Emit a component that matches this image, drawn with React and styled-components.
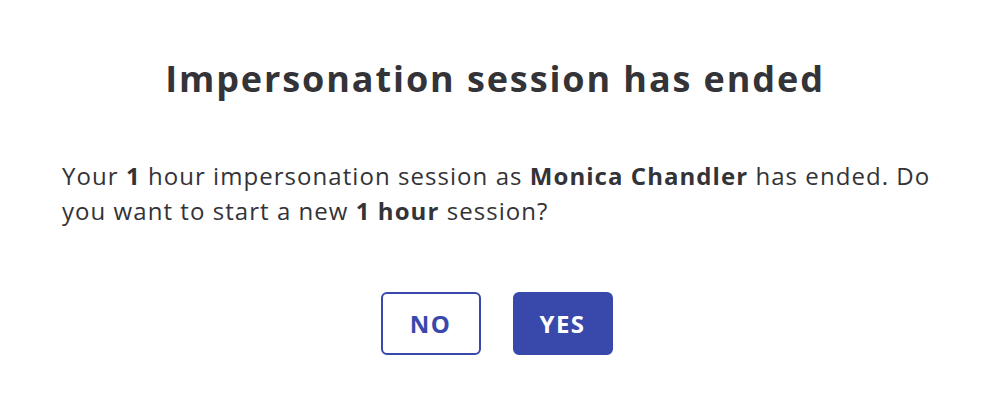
import React from "react";
import styled, { createGlobalStyle } from "styled-components";

const Global = createGlobalStyle`
  html, body { margin: 0; padding: 0; background: #ffffff; }
  body { font-family: "Open Sans", Lato, "Liberation Sans", sans-serif; }
`;

const Dialog = styled.div`
  box-sizing: border-box;
  width: 993px;
  height: 414px;
  padding: 55px 62px 0;
  display: flex;
  flex-direction: column;
  background: #ffffff;
`;

const Title = styled.h1`
  margin: 0 3px 0 0;
  text-align: center;
  font-size: 36px;
  line-height: 48px;
  font-weight: 700;
  letter-spacing: 1.9px;
  color: #333338;
`;

const Message = styled.p`
  margin: 55px -20px 0 0;
  font-size: 24px;
  line-height: 35px;
  font-weight: 400;
  letter-spacing: 1.05px;
  color: #333338;
  b { font-weight: 700; }
`;

const Actions = styled.div`
  margin-top: 64px;
  display: flex;
  justify-content: center;
  gap: 32px;
`;

const Button = styled.button`
  box-sizing: border-box;
  width: 100px;
  height: 63px;
  padding: 0;
  border-radius: 6px;
  border: 2px solid #3949ab;
  background: ${(p) => (p.$primary ? "#3949ab" : "#ffffff")};
  color: ${(p) => (p.$primary ? "#ffffff" : "#3949ab")};
  font-family: inherit;
  font-size: 24px;
  font-weight: 700;
  letter-spacing: 1.5px;
  cursor: pointer;
`;

export default function App() {
  return (
    <>
      <Global />
      <Dialog>
        <Title>Impersonation session has ended</Title>
        <Message>
          Your <b>1</b> hour impersonation session as <b>Monica Chandler</b> has ended. Do you want to start a new <b>1 hour</b> session?
        </Message>
        <Actions>
          <Button>NO</Button>
          <Button $primary>YES</Button>
        </Actions>
      </Dialog>
    </>
  );
}
